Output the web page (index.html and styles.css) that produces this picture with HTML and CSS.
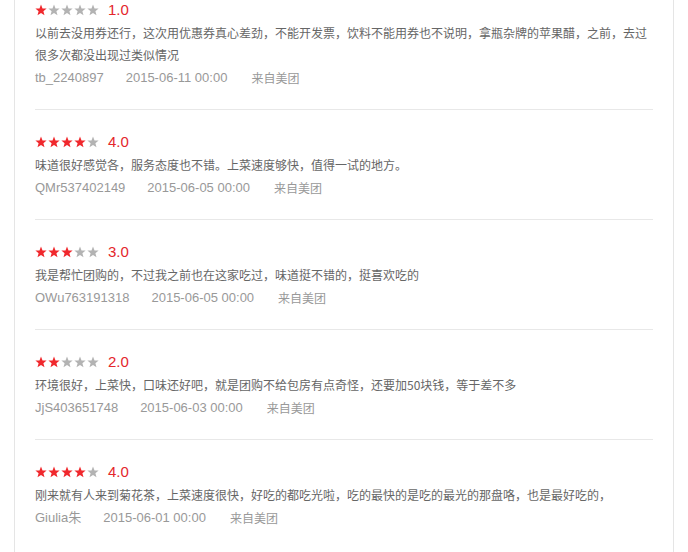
FILE: index.html
```html
<!DOCTYPE html>
<html lang="zh-CN">
<head>
<meta charset="utf-8">
<title>评价</title>
<link rel="stylesheet" href="styles.css">
</head>
<body>
<svg width="0" height="0" class="defs">
  <defs>
    <polygon id="star" points="6,0.6 7.5,4.4 11.6,4.6 8.4,7.2 9.5,11.2 6,8.9 2.5,11.2 3.6,7.2 0.4,4.6 4.5,4.4"/>
  </defs>
</svg>
<div class="box">
  <ul class="reviews">
    <li class="review">
      <div class="rating">
        <span class="stars">
          <svg class="star on" viewBox="0 0 12 12"><use href="#star"/></svg><svg class="star" viewBox="0 0 12 12"><use href="#star"/></svg><svg class="star" viewBox="0 0 12 12"><use href="#star"/></svg><svg class="star" viewBox="0 0 12 12"><use href="#star"/></svg><svg class="star" viewBox="0 0 12 12"><use href="#star"/></svg>
        </span>
        <span class="score">1.0</span>
      </div>
      <p class="text">以前去没用券还行，这次用优惠券真心差劲，不能开发票，饮料不能用券也不说明，拿瓶杂牌的苹果醋，之前，去过很多次都没出现过类似情况</p>
      <div class="meta"><span class="user">tb_2240897</span><span class="date">2015-06-11 00:00</span><span class="src">来自美团</span></div>
    </li>
    <li class="review">
      <div class="rating">
        <span class="stars">
          <svg class="star on" viewBox="0 0 12 12"><use href="#star"/></svg><svg class="star on" viewBox="0 0 12 12"><use href="#star"/></svg><svg class="star on" viewBox="0 0 12 12"><use href="#star"/></svg><svg class="star on" viewBox="0 0 12 12"><use href="#star"/></svg><svg class="star" viewBox="0 0 12 12"><use href="#star"/></svg>
        </span>
        <span class="score">4.0</span>
      </div>
      <p class="text">味道很好感觉各，服务态度也不错。上菜速度够快，值得一试的地方。</p>
      <div class="meta"><span class="user">QMr537402149</span><span class="date">2015-06-05 00:00</span><span class="src">来自美团</span></div>
    </li>
    <li class="review">
      <div class="rating">
        <span class="stars">
          <svg class="star on" viewBox="0 0 12 12"><use href="#star"/></svg><svg class="star on" viewBox="0 0 12 12"><use href="#star"/></svg><svg class="star on" viewBox="0 0 12 12"><use href="#star"/></svg><svg class="star" viewBox="0 0 12 12"><use href="#star"/></svg><svg class="star" viewBox="0 0 12 12"><use href="#star"/></svg>
        </span>
        <span class="score">3.0</span>
      </div>
      <p class="text">我是帮忙团购的，不过我之前也在这家吃过，味道挺不错的，挺喜欢吃的</p>
      <div class="meta"><span class="user">OWu763191318</span><span class="date">2015-06-05 00:00</span><span class="src">来自美团</span></div>
    </li>
    <li class="review">
      <div class="rating">
        <span class="stars">
          <svg class="star on" viewBox="0 0 12 12"><use href="#star"/></svg><svg class="star on" viewBox="0 0 12 12"><use href="#star"/></svg><svg class="star" viewBox="0 0 12 12"><use href="#star"/></svg><svg class="star" viewBox="0 0 12 12"><use href="#star"/></svg><svg class="star" viewBox="0 0 12 12"><use href="#star"/></svg>
        </span>
        <span class="score">2.0</span>
      </div>
      <p class="text">环境很好，上菜快，口味还好吧，就是团购不给包房有点奇怪，还要加50块钱，等于差不多</p>
      <div class="meta"><span class="user">JjS403651748</span><span class="date">2015-06-03 00:00</span><span class="src">来自美团</span></div>
    </li>
    <li class="review">
      <div class="rating">
        <span class="stars">
          <svg class="star on" viewBox="0 0 12 12"><use href="#star"/></svg><svg class="star on" viewBox="0 0 12 12"><use href="#star"/></svg><svg class="star on" viewBox="0 0 12 12"><use href="#star"/></svg><svg class="star on" viewBox="0 0 12 12"><use href="#star"/></svg><svg class="star" viewBox="0 0 12 12"><use href="#star"/></svg>
        </span>
        <span class="score">4.0</span>
      </div>
      <p class="text">刚来就有人来到菊花茶，上菜速度很快，好吃的都吃光啦，吃的最快的是吃的最光的那盘咯，也是最好吃的，</p>
      <div class="meta"><span class="user">Giulia朱</span><span class="date">2015-06-01 00:00</span><span class="src">来自美团</span></div>
    </li>
  </ul>
</div>
</body>
</html>
```

FILE: styles.css
```css
html, body {
  margin: 0;
  padding: 0;
  background: #fff;
}

body {
  font-family: "Noto Sans CJK SC", "Liberation Sans", sans-serif;
  font-size: 12px;
  color: #666;
  overflow: hidden;
  height: 552px;
}

.defs {
  position: absolute;
  width: 0;
  height: 0;
}

.box {
  margin-left: 14px;
  width: 618px;
  height: 600px;
  border-left: 1px solid #e5e5e5;
  border-right: 1px solid #e5e5e5;
  padding: 0 20px;
}

.reviews {
  list-style: none;
  margin: 0;
  padding: 0;
}

.review {
  padding: 22px 0 20px;
  border-bottom: 1px solid #e8e8e8;
}

.review:first-child {
  padding-top: 0;
}

.review:last-child {
  border-bottom: none;
}

.rating {
  height: 22px;
  display: flex;
  align-items: center;
  margin-top: -1px;
  margin-bottom: 1px;
}

.stars {
  display: flex;
  gap: 1px;
}

.star {
  width: 12px;
  height: 12px;
  fill: #b3b3b3;
  display: block;
}

.star.on {
  fill: #f0282d;
}

.score {
  margin-left: 9px;
  font-family: "Liberation Sans", sans-serif;
  font-size: 15px;
  color: #e4262c;
  line-height: 22px;
}

.text {
  margin: 0;
  line-height: 22px;
  color: #666;
}

.meta {
  line-height: 22px;
  color: #999;
  display: flex;
  font-family: "Liberation Sans", "Noto Sans CJK SC", sans-serif;
  font-size: 13px;
  margin-top: 1px;
}

.meta span {
  margin-right: 24px;
}

.meta .user {
  margin-right: 22px;
}

.meta .src {
  font-family: "Noto Sans CJK SC", sans-serif;
  font-size: 12px;
}
```
